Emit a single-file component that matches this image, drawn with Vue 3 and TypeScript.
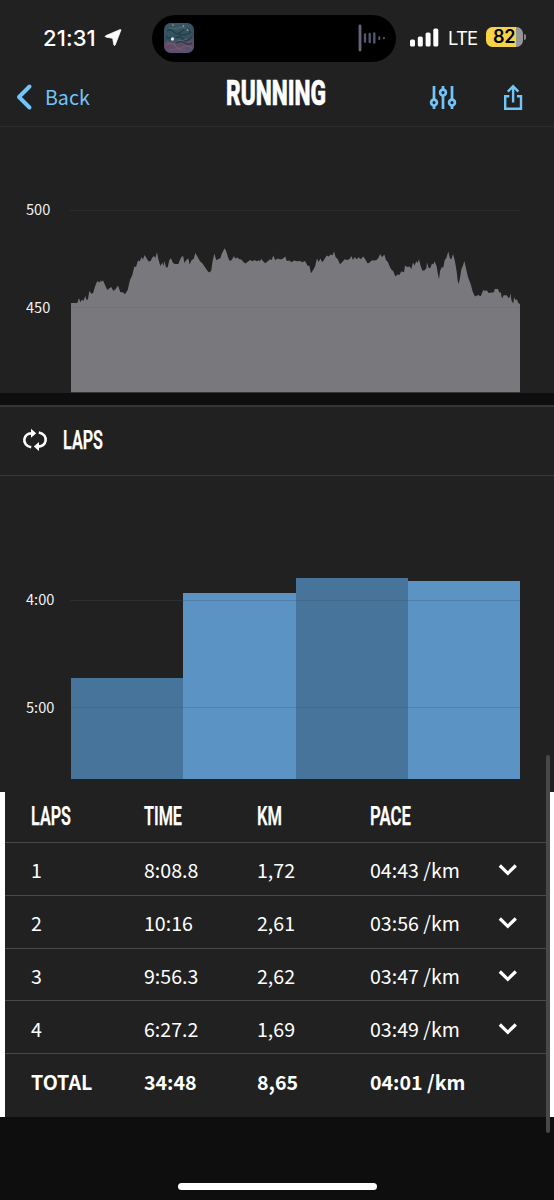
<script setup lang="ts">
interface Lap {
  label: string
  time: string
  km: string
  pace: string
}

const laps: Lap[] = [
  { label: '1', time: '8:08.8', km: '1,72', pace: '04:43 /km' },
  { label: '2', time: '10:16', km: '2,61', pace: '03:56 /km' },
  { label: '3', time: '9:56.3', km: '2,62', pace: '03:47 /km' },
  { label: '4', time: '6:27.2', km: '1,69', pace: '03:49 /km' },
]
const total: Lap = { label: 'TOTAL', time: '34:48', km: '8,65', pace: '04:01 /km' }

const headings = [
  { text: 'LAPS', width: 39 },
  { text: 'TIME', width: 37 },
  { text: 'KM', width: 24 },
  { text: 'PACE', width: 40 },
]

// Pace bars, in pixels of height.
const bars: number[] = [101.3, 186.3, 201.3, 198.3]

// Altitude samples as "x,y" pairs in thirds of a pixel.
const climb =
  '213,339 232,339 237,324 241,337 246,329 250,333 256,318 260,331 264,327 268,303 275,312 280,308 285,290 292,273 298,278 303,271 305,276 309,271 315,285 322,300 328,295 334,291 340,303 347,297 354,287 361,306 370,308 375,313 383,300 390,270 397,255 403,230 408,231 414,212 420,214 424,201 429,209 434,195 440,206 446,215 452,213 457,203 462,198 466,204 471,187 475,207 481,228 487,218 490,229 493,213 498,232 503,233 508,210 513,205 519,219 525,222 535,222 541,207 546,199 550,200 553,219 559,210 565,206 569,224 575,210 581,207 586,189 592,200 600,214 607,220 615,232 624,245 629,248 634,241 637,218 643,191 649,211 655,207 661,205 666,190 674,175 679,185 684,202 689,213 695,210 702,198 705,206 712,203 718,208 724,209 730,216 737,221 745,214 751,210 757,214 764,210 770,214 775,211 779,214 784,207 790,215 796,220 803,214 810,208 815,210 820,197 826,211 832,206 840,208'
const descent =
  '36,88 41,84 46,80 50,93 58,92 65,97 72,92 80,94 90,93 97,97 105,93 110,102 114,109 118,107 123,130 129,121 135,110 141,86 146,96 151,86 157,97 163,88 170,77 176,80 182,74 188,76 192,65 197,82 203,87 210,103 217,96 224,88 232,90 239,87 244,78 249,90 254,81 260,88 266,82 272,88 280,80 287,90 293,101 300,97 306,91 314,92 320,90 326,83 330,72 336,82 343,74 348,90 354,97 360,112 364,119 370,124 376,140 382,134 388,135 394,124 402,127 405,107 412,111 419,110 424,117 429,98 434,107 439,93 443,99 447,88 452,108 457,122 463,122 469,115 471,97 476,114 481,114 486,101 490,104 494,94 500,110 504,134 507,148 510,124 515,112 520,113 524,91 529,84 535,65 540,86 544,88 549,72 555,95 560,125 563,152 566,162 570,144 574,119 579,107 583,93 588,115 594,141 602,162 608,185 615,200 624,195 632,199 640,180 645,183 650,181 656,189 665,188 672,187 674,177 684,177 688,188 692,187 696,206 701,196 710,196 716,204 719,203 721,190 725,213 730,221 732,201 736,210 741,208 744,218 750,223'

function shift(samples: string, dx: number, dy: number): string {
  return samples
    .split(' ')
    .map((pair) => {
      const [x, y] = pair.split(',').map(Number)
      return `${x + dx},${y + dy}`
    })
    .join(' ')
}

const altitude = `${shift(climb, 0, 0)} ${shift(descent, 810, 120)} 1560,607 213,607`
</script>

<template>
  <div class="screen">
    <header class="top">
      <div class="status">
        <div class="clock">
          <span class="clock-text">21:31</span>
          <svg width="18" height="18" viewBox="0 0 18 18"><path d="M16.900 1.100 11.200 16Q10.500 17.300 9.900 16L8.700 9.300 1.700 8Q.6 7.300 1.700 6.700L15.800 .7Q17 .3 16.900 1.100Z" fill="#fff" stroke="#fff" stroke-width=".8" stroke-linejoin="round" /></svg>
        </div>
        <div class="island">
          <svg class="cover" width="30" height="30" viewBox="0 0 30 30">
            <defs>
              <linearGradient id="sky" x1="0" y1="0" x2=".15" y2="1">
                <stop offset="0" stop-color="#3d5660" />
                <stop offset=".55" stop-color="#31505e" />
                <stop offset=".72" stop-color="#5d4c65" />
                <stop offset="1" stop-color="#5b5072" />
              </linearGradient>
            </defs>
            <rect width="30" height="30" rx="6.500" fill="url(#sky)" />
            <path d="M3 8q4-3 7 1t8-1 9 2M12 15q4-3 7 1t9-2M2 13q3 4 5 1M14 11q5 2 12-1M12 20q6-3 9 0t7 0" fill="none" stroke="#233e4b" stroke-width="1.300" />
            <path d="M5 5q4 2 9 0t11 3M13 17q5 2 10-1M3 19q5 2 9 3" fill="none" stroke="#56747c" stroke-width=".7" />
            <path d="M2 22q6-3 9 1t8 1 9 1M5 27q7-2 16 0" fill="none" stroke="#825365" stroke-width="1.200" />
            <circle cx="8.500" cy="16" r="1.700" fill="#e9e4de" />
            <circle cx="19.500" cy="3" r=".8" fill="#a9bcbc" />
            <circle cx="23.500" cy="7" r=".8" fill="#a9bcbc" />
            <circle cx="9" cy="2" r=".7" fill="#a9bcbc" />
          </svg>
          <svg class="wave" width="28" height="28" viewBox="0 0 28 28" stroke-linecap="round" fill="none">
            <path d="M2 2V26" stroke="#686376" stroke-width="2.800" />
            <path d="M7 10.300V17.700M11.700 9.800V18.200M16.300 9.300V18.700" stroke="#525870" stroke-width="2.300" />
            <path d="M21.300 13.300V14.900M25.900 14V14.200" stroke="#525870" stroke-width="2.100" />
          </svg>
        </div>
        <svg class="signal" width="29" height="19" viewBox="0 0 29 19" fill="#fff">
          <rect x="0" y="11.500" width="5" height="7" rx="1.600" /><rect x="7.800" y="8.500" width="5" height="10" rx="1.600" />
          <rect x="15.600" y="4.500" width="5" height="14" rx="1.600" /><rect x="23.300" y=".6" width="5" height="17.900" rx="1.600" />
        </svg>
        <span class="network">LTE</span>
        <div class="battery"><span class="charge">82</span><i class="cap"></i></div>
      </div>
      <nav class="nav">
        <div class="back">
          <svg width="18" height="28" viewBox="0 0 18 28"><path d="M14.500 3.500 4 14 14.500 24.500" fill="none" stroke="#72c5f7" stroke-width="4" stroke-linecap="round" stroke-linejoin="round" /></svg>
          <span class="back-text">Back</span>
        </div>
        <svg class="title" width="104" height="34" viewBox="0 0 104 34"><text class="bold" x="0" y="29" font-size="35.500" textLength="100" lengthAdjust="spacingAndGlyphs">RUNNING</text></svg>
        <svg class="tune" width="28" height="26" viewBox="0 0 28 26" fill="none" stroke="#72c5f7" stroke-width="2.700">
          <path d="M5 1V14.500M5 20.500V24M14 1V5M14 10.500V24M23 1V14.500M23 20.500V24" />
          <circle cx="5" cy="17.600" r="2.900" /><circle cx="14" cy="7.600" r="2.900" /><circle cx="23" cy="17.600" r="2.900" />
        </svg>
        <svg class="share" width="20" height="27" viewBox="0 0 20 27" fill="none" stroke="#72c5f7" stroke-width="2.400">
          <path d="M6.300 12.200H2.200V24.800H18V12.200H13.900M10.100 18.500V2.500M4.800 7.600 10.100 2.300 15.400 7.600" />
        </svg>
      </nav>
    </header>

    <section class="altitude">
      <svg width="554" height="266" viewBox="0 0 554 266">
        <g transform="translate(0 62.900) scale(.33333)">
          <polygon :points="altitude" fill="#79787d" />
        </g>
        <path d="M71 83.500H520M71 180.500H520" stroke="#5b5a5e" stroke-opacity=".35" stroke-width="1" stroke-dasharray="1 1" />
        <text class="axis" x="26" y="88.300">500</text>
        <text class="axis" x="26" y="185.500">450</text>
      </svg>
    </section>

    <div class="divider"></div>

    <section class="lap-heading">
      <svg width="26" height="24" viewBox="0 0 26 24" fill="none" stroke="#fff" stroke-width="2.600">
        <path d="M9.200 19.300C4.300 18.500 1.700 14.700 2.400 11 3.100 7.500 5.800 5.400 9.500 5.200M16.800 4.500C21.700 5.300 24.300 9.100 23.600 12.800 22.900 16.300 20.200 18.400 16.500 18.600" />
        <path d="M9 .8 14.200 5.200 9 9.800ZM17 14 11.800 18.600 17 23Z" fill="#fff" stroke="none" />
      </svg>
      <svg width="44" height="28" viewBox="0 0 44 28"><text class="condensed" x="0" y="21" font-size="25.500" textLength="40" lengthAdjust="spacingAndGlyphs">LAPS</text></svg>
    </section>

    <section class="pace">
      <div class="axis-labels"><span>4:00</span><span>5:00</span></div>
      <div class="bars">
        <div v-for="(height, i) in bars" :key="i" class="bar" :class="{ deep: i % 2 === 0 }" :style="{ height: height + 'px' }"></div>
        <i class="grid four"></i>
        <i class="grid five"></i>
      </div>
    </section>

    <section class="table">
      <div class="row head">
        <svg v-for="h in headings" :key="h.text" width="50" height="28" viewBox="0 0 50 28"><text class="condensed" x="0" y="23" font-size="25.500" :textLength="h.width + 1" lengthAdjust="spacingAndGlyphs">{{ h.text }}</text></svg>
      </div>
      <div v-for="lap in laps" :key="lap.label" class="row">
        <span>{{ lap.label }}</span><span>{{ lap.time }}</span><span>{{ lap.km }}</span><span>{{ lap.pace }}</span>
        <svg class="chevron" width="20" height="14" viewBox="0 0 20 14"><path d="M1.800 2.500 9.800 10.300 17.800 2.500" fill="none" stroke="#fff" stroke-width="3.200" /></svg>
      </div>
      <div class="row total">
        <span>{{ total.label }}</span><span>{{ total.time }}</span><span>{{ total.km }}</span><span>{{ total.pace }}</span>
      </div>
    </section>

    <footer class="bottom"><div class="home"></div></footer>
    <i class="scrollbar"></i>
  </div>
</template>

<style>
html, body { background: #0e0e0e; overflow: hidden; }
</style>

<style scoped>
* { box-sizing: border-box; }
svg { display: block; flex: none; overflow: visible; }
.screen { position: relative; width: 554px; height: 1200px; background: #212121; color: #fff; font-family: "Noto Sans CJK SC", "Noto Sans", sans-serif; overflow: hidden; }
.top { height: 127px; border-bottom: 1px solid #2c2c2c; }
.status { height: 76px; padding-top: 15px; display: flex; align-items: flex-start; font-family: Inter, sans-serif; }
.clock { display: flex; width: 152px; padding: 10px 0 0 43px; gap: 5px; }
.clock svg { margin-top: 4px; }
.clock-text { width: 56px; font-size: 22px; line-height: 26px; font-weight: 500; letter-spacing: .1px; white-space: nowrap; }
.island { width: 244px; height: 47px; border-radius: 24px; background: #000; display: flex; justify-content: space-between; padding: 8px 10px 0 12px; }
.wave { margin-top: 1px; }
.signal { margin: 12.5px 0 0 14px; }
.network { width: 38px; margin: 11px 0 0 9px; font-size: 18.5px; line-height: 24px; font-weight: 400; letter-spacing: -.8px; }
.battery { position: relative; width: 37px; height: 20px; margin-top: 12px; border-radius: 6.5px; background: linear-gradient(90deg, #f5d447 0 30px, #96969a 30px); }
.charge { display: block; padding-left: 7px; color: #000; font-size: 18px; line-height: 20px; font-weight: 600; letter-spacing: -.2px; }
.cap { position: absolute; right: -3px; top: 7px; width: 2px; height: 6px; border-radius: 0 2px 2px 0; background: #89898c; }
.nav { display: flex; align-items: flex-start; padding-left: 15px; }
.back { display: flex; width: 211px; padding-top: 7px; }
.back-text { margin-left: 12px; font-size: 19.6px; line-height: 28px; color: #72c5f7; }
.bold { font-family: Roboto, sans-serif; font-weight: 800; fill: #fff; stroke: #fff; stroke-width: .7px; }
.condensed { font-family: Roboto, sans-serif; font-weight: 600; fill: #fff; stroke: #fff; stroke-width: .25px; }
.tune { margin: 9px 0 0 99px; }
.share { margin: 8px 0 0 46px; }
.altitude { height: 266px; }
.axis { font-family: "Noto Sans CJK SC", sans-serif; font-size: 14.6px; fill: #f1f1f1; }
.divider { height: 14px; background: #0e0e0e; border-bottom: 2px solid #353535; }
.lap-heading { height: 69px; border-bottom: 1px solid #383838; display: flex; align-items: flex-start; gap: 15px; padding: 21px 0 0 22px; }
.pace { height: 316px; display: flex; padding: 101px 34px 13px 0; }
.axis-labels { width: 71px; padding: 11px 0 0 26px; display: flex; flex-direction: column; gap: 86px; font-size: 14.6px; line-height: 22px; color: #f1f1f1; }
.bars { position: relative; flex: 1; display: grid; grid-template-columns: repeat(4, 1fr); align-items: end; }
.bar { background: #5a93c4; }
.deep { background: #46749b; }
.grid { position: absolute; left: 0; right: 0; height: 1px; background: repeating-linear-gradient(90deg, rgba(65, 80, 92, .42) 0 1px, rgba(65, 80, 92, .2) 1px 2px); }
.four { top: 23px; }
.five { top: 130px; }
.table { height: 325px; border-left: 5.500px solid #fff; border-right: 5.500px solid #fff; }
.row { display: grid; grid-template-columns: 113px 113px 113px 129px 20px; height: 52.8px; padding-left: 26px; border-bottom: 1px solid #484848; align-items: center; font-size: 19.6px; line-height: 28px; white-space: nowrap; }
.row > span { position: relative; top: 1.4px; }
.head { height: 51px; }
.head svg { margin-top: -2px; }
.chevron { margin: 3px 0 0 -1px; }
.total { font-weight: 700; border-bottom: 0; }
.bottom { height: 83px; background: #0e0e0e; padding-top: 66px; }
.home { width: 199px; height: 7px; margin: 0 auto; border-radius: 4px; background: #fff; }
.scrollbar { position: absolute; left: 546px; top: 755px; width: 4px; height: 378px; border-radius: 2px; background: #484848; }
</style>
